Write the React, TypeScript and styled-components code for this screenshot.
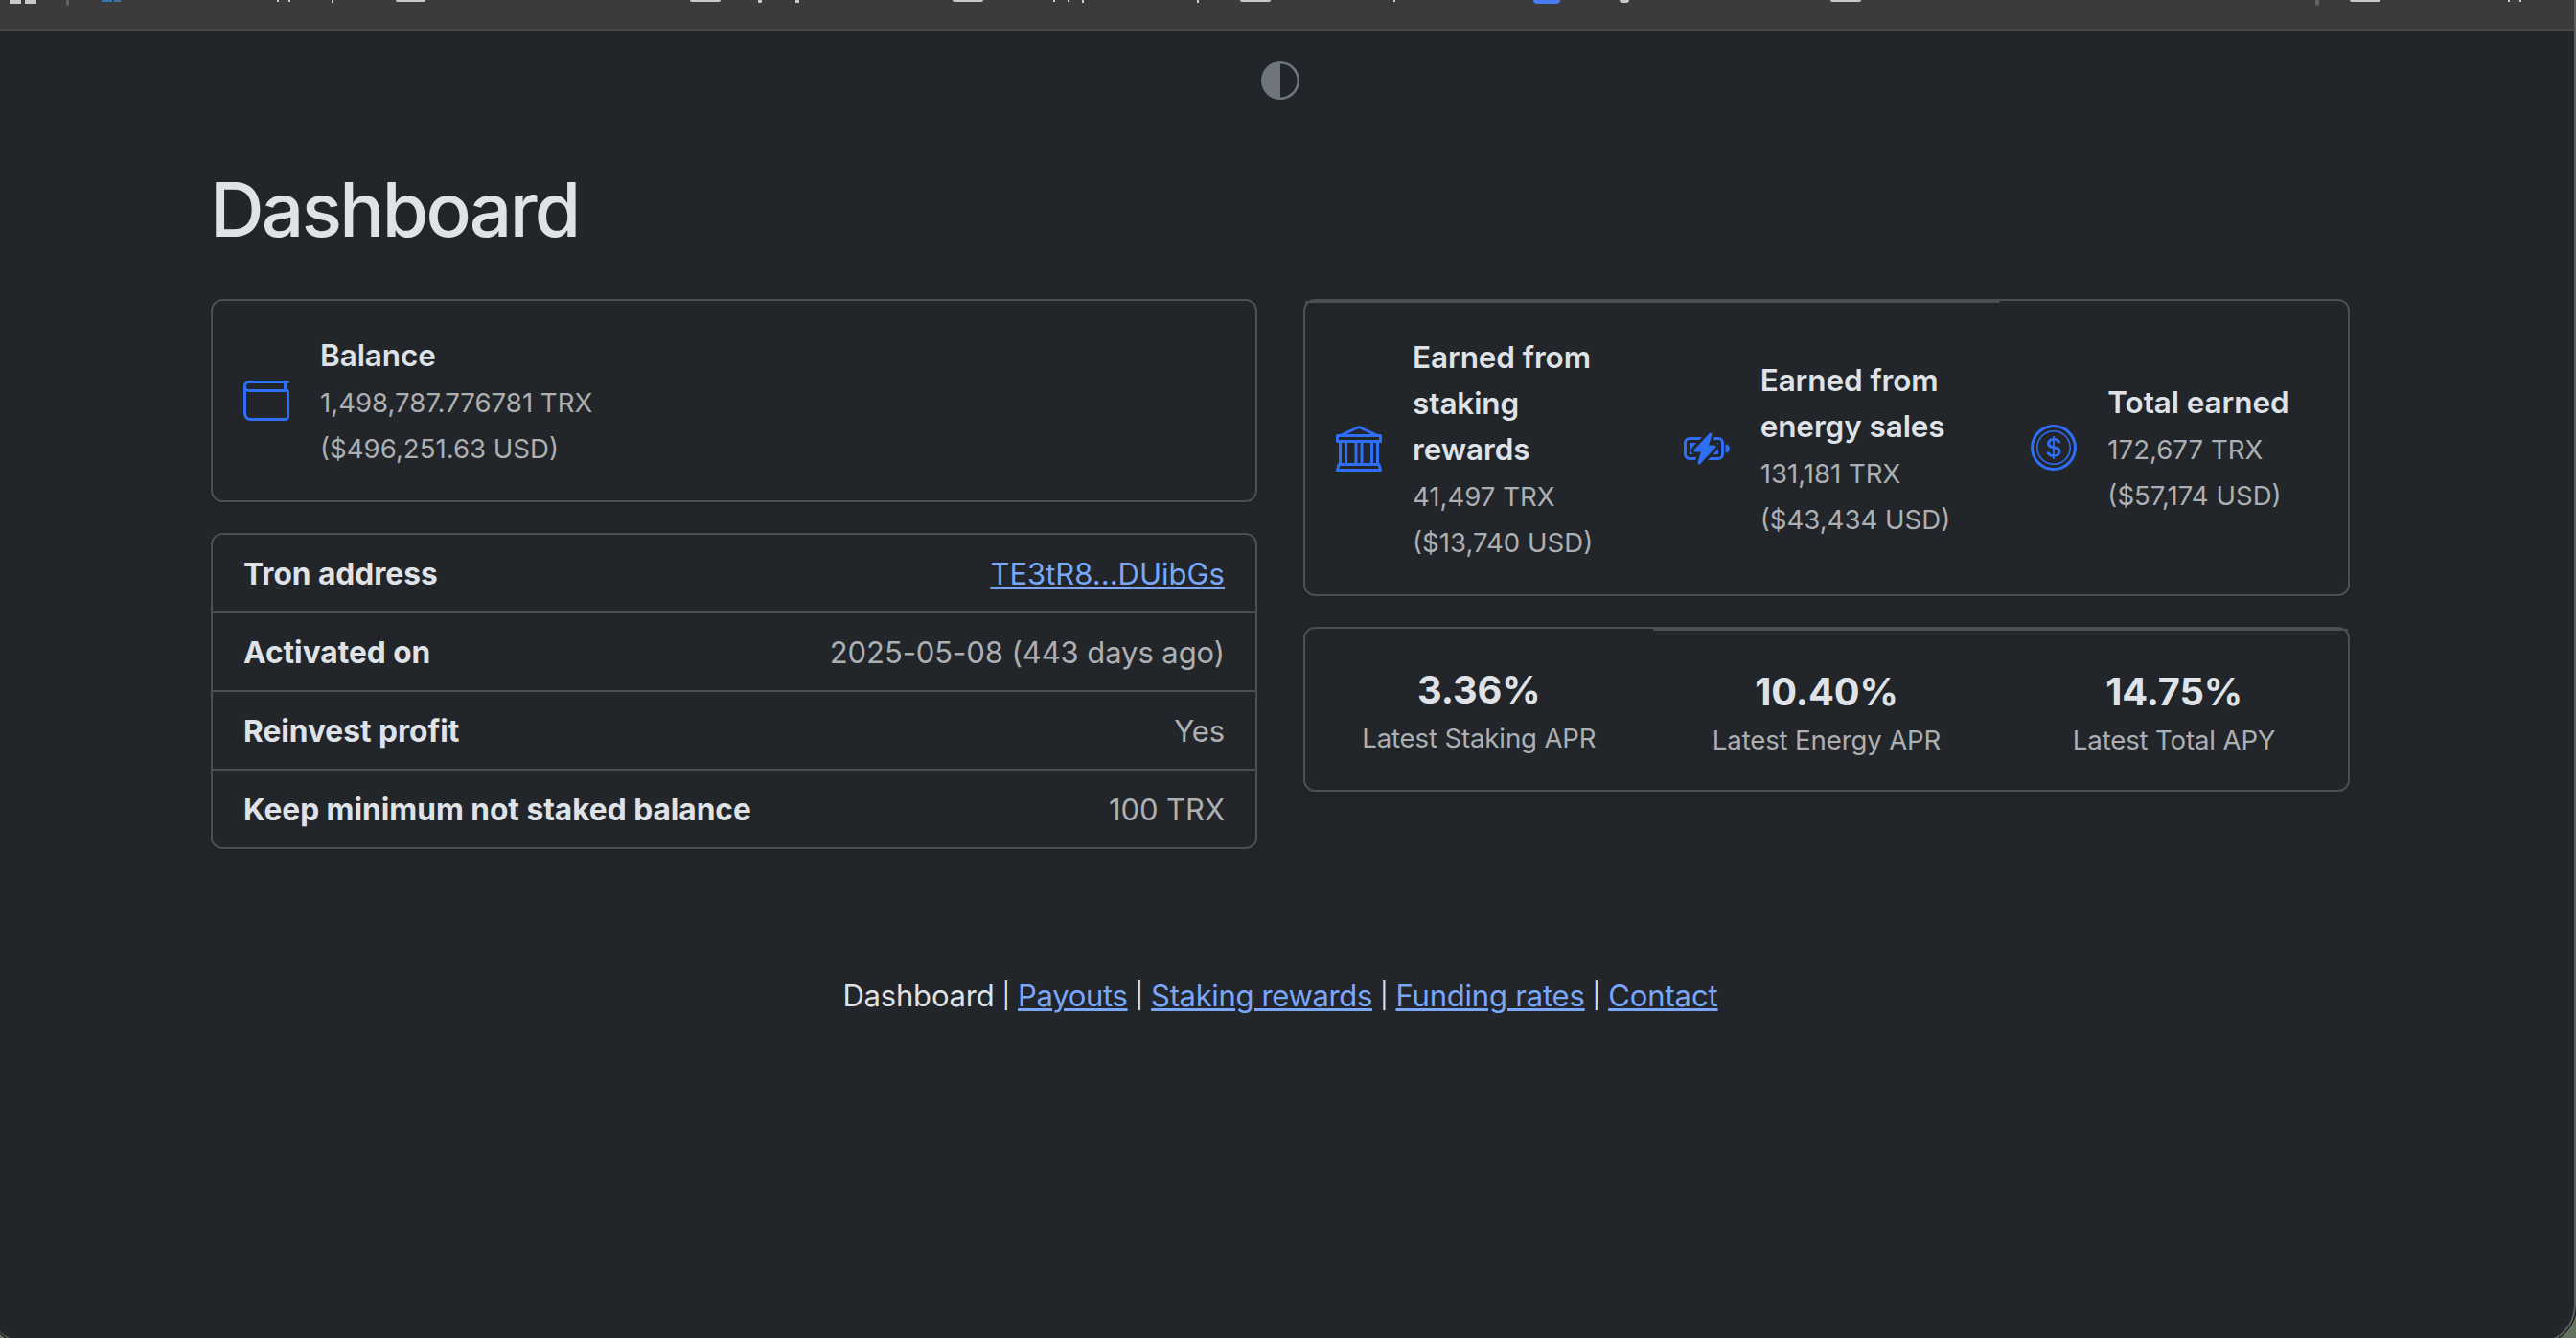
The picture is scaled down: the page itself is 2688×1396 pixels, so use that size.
import * as React from 'react';
import { BsBank, BsBatteryCharging, BsCircleHalf, BsCoin, BsWallet } from 'react-icons/bs';
import styled, { createGlobalStyle } from 'styled-components';

const bodyBg = '#22252a';
const bodyColor = '#dfe2e7';
const secondaryColor = '#adb0b3';
const borderColor = '#4b4e53';
const linkColor = '#7aa7f9';
const primaryColor = '#2f6ef7';

const GlobalStyle = createGlobalStyle`
    * {
        box-sizing: border-box;
    }
    body {
        margin: 0;
        overflow: hidden;
        background: #64735f;
        color: ${bodyColor};
        font-family: Inter, 'Liberation Sans', sans-serif;
        font-size: 32px;
        font-weight: 440;
        line-height: 48px;
    }
`;

const Desktop = styled.div`
    height: 100vh;
    overflow: hidden;
`;

const Window = styled.div`
    height: 1402px;
    margin-left: -12px;
    overflow: hidden;
    background: ${bodyBg};
    border-right: 2px solid #5c5f61;
    border-bottom: 2px solid #5c5f61;
    border-radius: 0 0 40px 40px;
    box-shadow: 0 0 0 1px #101210;
`;

const BookmarkBar = styled.div`
    display: flex;
    align-items: flex-start;
    height: 32px;
    padding-left: 12px;
    background: #3b3b3b;
    border-bottom: 2px solid #494949;
`;

const Mark = styled.span<MarkProps>`
    flex: none;
    width: ${p => p.$width}px;
    height: ${p => p.$height}px;
    margin-left: ${p => p.$gap}px;
    background: ${p => p.$color || '#c9c9c9'};
    border-radius: 0 0 ${p => p.$radius || 0}px ${p => p.$radius || 0}px;
`;

const Page = styled.main`
    display: flex;
    flex-direction: column;
    width: 2232px;
    margin-left: 232px;
`;

const ThemeToggle = styled.div`
    display: flex;
    justify-content: center;
    padding: 32px 0 66px;
    color: #6e757d;
    svg {
        width: 40px;
        height: 40px;
    }
`;

const Heading = styled.h1`
    margin: 0 0 45px -1px;
    font-size: 78.4px;
    font-weight: 530;
    line-height: 97px;
    letter-spacing: -2.7px;
`;

const Columns = styled.div`
    display: grid;
    grid-template-columns: 1fr 1fr;
    align-items: start;
    gap: 48px;
`;

const Stack = styled.div`
    display: flex;
    flex-direction: column;
    gap: 32px;
`;

const Card = styled.section`
    display: grid;
    grid-auto-columns: 1fr;
    grid-auto-flow: column;
    border: 2px solid ${borderColor};
    border-radius: 12px;
    box-shadow: 0 4px 8px rgba(0, 0, 0, 0.075);
`;

const Amount = styled.div<BorderProps>`
    display: flex;
    align-items: center;
    padding: 32px;
    border-top: ${p => (p.$borderTop ? `2px solid ${borderColor}` : 'none')};
    > svg {
        flex: none;
        width: 48px;
        height: 48px;
        margin-right: 32px;
        color: ${primaryColor};
    }
`;

const AmountText = styled.div`
    margin: 1px 0 -1px;
`;

const AmountTitle = styled.div`
    font-size: 31.5px;
    font-weight: 620;
    letter-spacing: -0.1px;
`;

const AmountLine = styled.div`
    height: 48px;
    color: ${secondaryColor};
    white-space: nowrap;
    span {
        font-size: 27.6px;
        line-height: 1;
    }
`;

const Details = styled.section`
    border: 2px solid ${borderColor};
    border-radius: 12px;
    box-shadow: 0 4px 8px rgba(0, 0, 0, 0.075);
`;

const DetailRow = styled.div`
    display: flex;
    justify-content: space-between;
    padding: 17px 32px 15px;
    & + & {
        border-top: 2px solid ${borderColor};
    }
`;

const DetailLabel = styled.div`
    font-size: 31.7px;
    font-weight: 700;
    letter-spacing: -0.03px;
`;

const DetailValue = styled.div`
    color: ${secondaryColor};
    font-size: 31px;
    letter-spacing: -0.08px;
`;

const Link = styled.a<{ $tracking?: number }>`
    color: ${linkColor};
    letter-spacing: ${p => p.$tracking || 0}px;
    text-decoration: underline;
    text-decoration-thickness: 3px;
    text-underline-offset: 2px;
    cursor: pointer;
`;

const Rate = styled.div<BorderProps>`
    padding: 34px 32px 31px;
    text-align: center;
    border-top: ${p => (p.$borderTop ? `2px solid ${borderColor}` : 'none')};
    .value {
        font-size: 39.8px;
        font-weight: 700;
        line-height: 60px;
        letter-spacing: -0.15px;
    }
    .label {
        margin-top: -1px;
        color: ${secondaryColor};
        font-size: 27.6px;
        line-height: 42px;
        letter-spacing: -0.15px;
        white-space: nowrap;
    }
`;

const Footer = styled.nav`
    display: flex;
    justify-content: center;
    margin-top: 129px;
    font-size: 31px;
`;

const Current = styled.span`
    letter-spacing: -0.2px;
`;

const Separator = styled.span`
    width: 24.5px;
    font-size: 26px;
    text-align: center;
`;

// bottom slivers of the bookmarks that are scrolled under the toolbar
const marks: Bookmark[] = [
    { x: 10, width: 12, height: 4 },
    { x: 26, width: 12, height: 4 },
    { x: 69, width: 3, height: 6, color: '#616161', radius: 2 },
    { x: 106, width: 11, height: 2, color: '#3b75a8' },
    { x: 119, width: 7, height: 2, color: '#3b75a8' },
    { x: 289, width: 2, height: 2 },
    { x: 301, width: 2, height: 2 },
    { x: 346, width: 2, height: 3 },
    { x: 413, width: 31, height: 2, radius: 2 },
    { x: 720, width: 32, height: 2, radius: 2 },
    { x: 791, width: 4, height: 3, radius: 1 },
    { x: 830, width: 4, height: 3, radius: 1 },
    { x: 994, width: 32, height: 2, radius: 2 },
    { x: 1099, width: 2, height: 2 },
    { x: 1114, width: 2, height: 2 },
    { x: 1129, width: 2, height: 3 },
    { x: 1249, width: 2, height: 3 },
    { x: 1294, width: 32, height: 2, radius: 2 },
    { x: 1454, width: 2, height: 2 },
    { x: 1600, width: 28, height: 4, color: '#4a7cf3', radius: 4 },
    { x: 1690, width: 10, height: 3, radius: 3 },
    { x: 1910, width: 32, height: 2, radius: 2 },
    { x: 2416, width: 4, height: 6, color: '#616161', radius: 2 },
    { x: 2452, width: 32, height: 2, radius: 2 },
    { x: 2617, width: 2, height: 2 },
    { x: 2629, width: 2, height: 2 },
];

const earnings = [
    {
        icon: <BsBank />,
        title: 'Earned from staking rewards',
        trx: '41,497 TRX',
        usd: '($13,740 USD)',
        borderTop: true,
    },
    {
        icon: <BsBatteryCharging />,
        title: 'Earned from energy sales',
        trx: '131,181 TRX',
        usd: '($43,434 USD)',
        borderTop: true,
    },
    {
        icon: <BsCoin />,
        title: 'Total earned',
        trx: '172,677 TRX',
        usd: '($57,174 USD)',
        borderTop: false,
    },
];

const rates = [
    { value: '3.36%', label: 'Latest Staking APR', borderTop: false },
    { value: '10.40%', label: 'Latest Energy APR', borderTop: true },
    { value: '14.75%', label: 'Latest Total APY', borderTop: true },
];

const details = [
    { label: 'Tron address', value: <Link>TE3tR8...DUibGs</Link> },
    { label: 'Activated on', value: '2025-05-08 (443 days ago)' },
    { label: 'Reinvest profit', value: 'Yes' },
    { label: 'Keep minimum not staked balance', value: '100 TRX' },
];

const pages = [
    { name: 'Payouts', tracking: -0.3 },
    { name: 'Staking rewards', tracking: -0.35 },
    { name: 'Funding rates', tracking: -0.2 },
    { name: 'Contact', tracking: -0.1 },
];

const AmountBlock = ({ icon, title, trx, usd, borderTop }: AmountProps) => (
    <Amount $borderTop={borderTop}>
        {icon}
        <AmountText>
            <AmountTitle>{title}</AmountTitle>
            <AmountLine>
                <span>{trx}</span>
            </AmountLine>
            <AmountLine>
                <span>{usd}</span>
            </AmountLine>
        </AmountText>
    </Amount>
);

export default class App extends React.Component {
    public render() {
        return (
            <Desktop>
                <GlobalStyle />
                <Window>
                    <BookmarkBar>
                        {marks.map((el, index) => {
                            const prev = marks[index - 1];
                            return (
                                <Mark
                                    key={el.x}
                                    $gap={prev ? el.x - prev.x - prev.width : el.x}
                                    $width={el.width}
                                    $height={el.height}
                                    $color={el.color}
                                    $radius={el.radius}
                                />
                            );
                        })}
                    </BookmarkBar>
                    <Page>
                        <ThemeToggle>
                            <BsCircleHalf />
                        </ThemeToggle>
                        <Heading>Dashboard</Heading>
                        <Columns>
                            <Stack>
                                <Card>
                                    <AmountBlock
                                        icon={<BsWallet />}
                                        title="Balance"
                                        trx="1,498,787.776781 TRX"
                                        usd="($496,251.63 USD)"
                                    />
                                </Card>
                                <Details>
                                    {details.map(el => (
                                        <DetailRow key={el.label}>
                                            <DetailLabel>{el.label}</DetailLabel>
                                            <DetailValue>{el.value}</DetailValue>
                                        </DetailRow>
                                    ))}
                                </Details>
                            </Stack>
                            <Stack>
                                <Card>
                                    {earnings.map(el => (
                                        <AmountBlock key={el.title} {...el} />
                                    ))}
                                </Card>
                                <Card>
                                    {rates.map(el => (
                                        <Rate key={el.label} $borderTop={el.borderTop}>
                                            <div className="value">{el.value}</div>
                                            <div className="label">{el.label}</div>
                                        </Rate>
                                    ))}
                                </Card>
                            </Stack>
                        </Columns>
                        <Footer>
                            <Current>Dashboard</Current>
                            {pages.map(el => (
                                <React.Fragment key={el.name}>
                                    <Separator>|</Separator>
                                    <Link $tracking={el.tracking}>{el.name}</Link>
                                </React.Fragment>
                            ))}
                        </Footer>
                    </Page>
                </Window>
            </Desktop>
        );
    }
}

interface MarkProps {
    $gap: number;
    $width: number;
    $height: number;
    $color?: string;
    $radius?: number;
}

interface BorderProps {
    $borderTop?: boolean;
}

interface Bookmark {
    x: number;
    width: number;
    height: number;
    color?: string;
    radius?: number;
}

interface AmountProps {
    icon: React.ReactNode;
    title: string;
    trx: string;
    usd: string;
    borderTop?: boolean;
}
